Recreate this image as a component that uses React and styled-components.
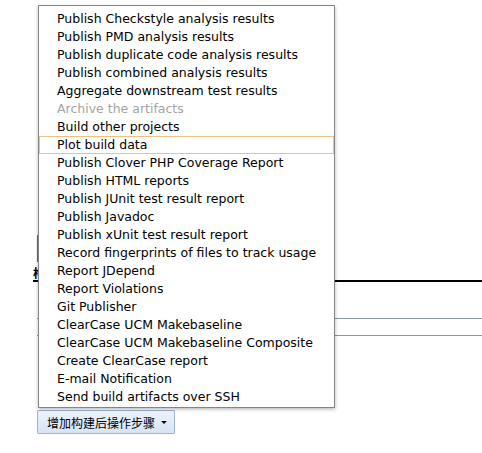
import React from "react";
import styled, { createGlobalStyle } from "styled-components";

const GlobalStyle = createGlobalStyle`
  html, body {
    margin: 0;
    padding: 0;
    background: #fff;
  }
  body {
    font-family: "DejaVu Sans", Verdana, sans-serif;
  }
`;

const Page = styled.div`
  position: relative;
  width: 482px;
  height: 453px;
  overflow: hidden;
  background: #fff;
`;

const Form = styled.div`
  display: flex;
  flex-direction: column;
  padding: 235px 0 0 37px;
`;

const HiddenButton = styled.div`
  width: 120px;
  height: 27px;
  border-left: 2px solid #6a6a6a;
  background: #e8e8e8;
`;

const Heading = styled.div`
  margin: 4px 0 0 -4px;
  height: 14px;
  font-family: "Noto Sans CJK SC", sans-serif;
  font-weight: 700;
  font-size: 12px;
  line-height: 14px;
  color: #000;
  border-bottom: 2px solid #000;
`;

const Rule = styled.div`
  margin-top: ${(p) => p.$gap}px;
  height: 1px;
  background: #8a98a6;
`;

const AddButton = styled.button`
  margin-top: 74px;
  align-self: flex-start;
  display: flex;
  align-items: center;
  gap: 6px;
  height: 24px;
  padding: 0 7px 0 9px;
  border: 1px solid #9fb4d2;
  border-radius: 1px;
  background: linear-gradient(#eef3fb, #d7e3f4);
  font-family: "Noto Sans CJK SC", sans-serif;
  font-size: 12px;
  color: #000;
`;

const Caret = styled.span`
  width: 0;
  height: 0;
  border-left: 3px solid transparent;
  border-right: 3px solid transparent;
  border-top: 3px solid #000;
  margin-top: 1px;
`;

const Menu = styled.ul`
  position: absolute;
  left: 38px;
  top: 5px;
  width: 295px;
  margin: 0;
  padding: 4px 0 1px;
  list-style: none;
  background: #fff;
  border: 1px solid #858585;
  box-shadow: 1px 2px 3px rgba(0, 0, 0, 0.18), -2px 1px 2px rgba(0, 0, 0, 0.08);
`;

const Item = styled.li`
  height: 18px;
  box-sizing: border-box;
  padding-left: 17px;
  border: 1px solid ${(p) => (p.$active ? "#e9c47a" : "transparent")};
  font-size: 12.5px;
  line-height: 16px;
  color: ${(p) => (p.$disabled ? "#a4a4a4" : "#000")};
  white-space: nowrap;
`;

const items = [
  "Publish Checkstyle analysis results",
  "Publish PMD analysis results",
  "Publish duplicate code analysis results",
  "Publish combined analysis results",
  "Aggregate downstream test results",
  "Archive the artifacts",
  "Build other projects",
  "Plot build data",
  "Publish Clover PHP Coverage Report",
  "Publish HTML reports",
  "Publish JUnit test result report",
  "Publish Javadoc",
  "Publish xUnit test result report",
  "Record fingerprints of files to track usage",
  "Report JDepend",
  "Report Violations",
  "Git Publisher",
  "ClearCase UCM Makebaseline",
  "ClearCase UCM Makebaseline Composite",
  "Create ClearCase report",
  "E-mail Notification",
  "Send build artifacts over SSH",
];

export default function App() {
  return (
    <Page>
      <GlobalStyle />
      <Form>
        <HiddenButton />
        <Heading>构建后操作</Heading>
        <Rule $gap={36} />
        <Rule $gap={16} />
        <AddButton>
          增加构建后操作步骤
          <Caret />
        </AddButton>
      </Form>
      <Menu>
        {items.map((t) => (
          <Item
            key={t}
            $active={t === "Plot build data"}
            $disabled={t === "Archive the artifacts"}
          >
            {t}
          </Item>
        ))}
      </Menu>
    </Page>
  );
}
